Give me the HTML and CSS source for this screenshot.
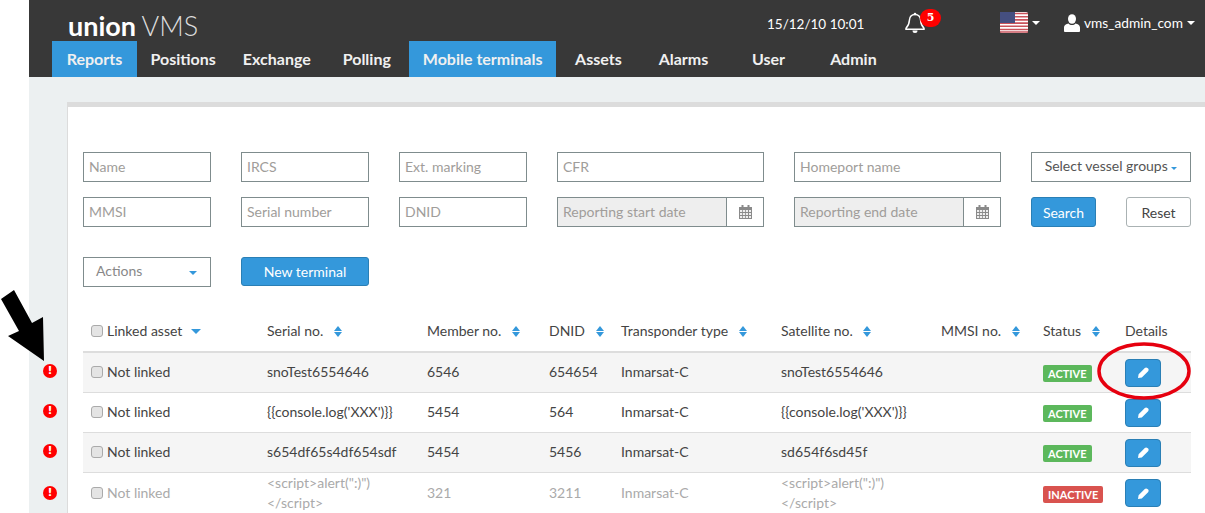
FILE: index.html
```html
<!DOCTYPE html>
<html lang="en">
<head>
    <meta charset="UTF-8">
    <title>union VMS</title>
    <link rel="stylesheet" href="styles.css">
</head>
<body>
    <div class="app">
        <header class="header">
            <div class="topbar">
                <div class="logo"><b>union</b> VMS</div>
                <div class="clock">15/12/10 10:01</div>
                <div class="bell">
                    <svg width="20" height="22" viewBox="0 0 20 22"><path d="M10 2.5c-3.6 0-5.4 2.6-5.6 5.8-.2 3.600-1 5.600-3.400 8v1h18v-1c-2.400-2.400-3.200-4.400-3.400-8C15.400 5.100 13.600 2.500 10 2.500z" fill="none" stroke="#fff" stroke-width="1.500"/><path d="M7.500 18.500a2.500 2.500 0 0 0 5 0z" fill="#fff"/><circle cx="10" cy="2" r="1.300" fill="#fff"/></svg>
                    <span class="bell-count">5</span>
                </div>
                <div class="lang">
                    <svg width="28" height="21" viewBox="0 0 28 21"><rect width="28" height="21" rx="2" fill="#fff"/><path d="M0 1.500h28M0 4.700h28M0 7.900h28M0 11.100h28M0 14.300h28M0 17.500h28M0 20h28" stroke="#c9535c" stroke-width="1.600"/><rect width="15" height="11" fill="#454f80"/></svg>
                    <span class="caret caret-white"></span>
                </div>
                <div class="account">
                    <svg width="16" height="18" viewBox="0 0 16 18"><ellipse cx="8" cy="5" rx="4" ry="4.800" fill="#fff"/><path d="M0 17v-3.500c0-2.500 2.500-3.500 4.500-4 1 1 2 1.500 3.500 1.500s2.500-.5 3.500-1.500c2 .5 4.500 1.500 4.500 4V17c0 .5-.5 1-1 1H1c-.5 0-1-.5-1-1z" fill="#fff"/></svg>
                    <span>vms_admin_com</span>
                    <span class="caret caret-white"></span>
                </div>
            </div>
            <nav class="nav">
                <a class="nav-item active">Reports</a>
                <a class="nav-item">Positions</a>
                <a class="nav-item">Exchange</a>
                <a class="nav-item">Polling</a>
                <a class="nav-item active">Mobile terminals</a>
                <a class="nav-item">Assets</a>
                <a class="nav-item">Alarms</a>
                <a class="nav-item">User</a>
                <a class="nav-item">Admin</a>
            </nav>
        </header>

        <main class="content">
            <section class="panel">
                <div class="filters">
                    <div class="field">Name</div>
                    <div class="field">IRCS</div>
                    <div class="field">Ext. marking</div>
                    <div class="field">CFR</div>
                    <div class="field">Homeport name</div>
                    <div class="field select-groups">Select vessel groups <span class="caret caret-blue caret-small"></span></div>

                    <div class="field">MMSI</div>
                    <div class="field">Serial number</div>
                    <div class="field">DNID</div>
                    <div class="date-field">
                        <div class="date-text">Reporting start date</div>
                        <div class="date-icon"><svg width="13" height="14" viewBox="0 0 13 14"><use href="#calendar"/></svg></div>
                    </div>
                    <div class="date-field">
                        <div class="date-text">Reporting end date</div>
                        <div class="date-icon"><svg width="13" height="14" viewBox="0 0 13 14"><use href="#calendar"/></svg></div>
                    </div>
                    <div class="filter-buttons">
                        <button class="btn btn-blue btn-search">Search</button>
                        <button class="btn btn-plain">Reset</button>
                    </div>
                </div>

                <div class="actions">
                    <div class="field actions-select">Actions <span class="caret caret-blue"></span></div>
                    <button class="btn btn-blue btn-new">New terminal</button>
                </div>

                <table class="results">
                    <colgroup>
                        <col class="col-linked"><col class="col-serial"><col class="col-member"><col class="col-dnid">
                        <col class="col-type"><col class="col-sat"><col class="col-mmsi"><col class="col-status"><col class="col-details">
                    </colgroup>
                    <thead>
                        <tr>
                            <th><span class="check"></span>Linked asset <span class="caret caret-blue sort-down"></span></th>
                            <th>Serial no. <span class="sort"></span></th>
                            <th>Member no. <span class="sort"></span></th>
                            <th>DNID <span class="sort"></span></th>
                            <th>Transponder type <span class="sort"></span></th>
                            <th>Satellite no. <span class="sort"></span></th>
                            <th>MMSI no. <span class="sort"></span></th>
                            <th>Status <span class="sort"></span></th>
                            <th>Details</th>
                        </tr>
                    </thead>
                    <tbody>
                        <tr>
                            <td><span class="alert-mark">!</span><span class="check"></span>Not linked</td>
                            <td>snoTest6554646</td>
                            <td>6546</td>
                            <td>654654</td>
                            <td>Inmarsat-C</td>
                            <td>snoTest6554646</td>
                            <td></td>
                            <td><span class="tag tag-green">ACTIVE</span></td>
                            <td><button class="btn btn-blue btn-edit"><svg width="11" height="11" viewBox="0 0 11 11"><use href="#pencil"/></svg></button></td>
                        </tr>
                        <tr>
                            <td><span class="alert-mark">!</span><span class="check"></span>Not linked</td>
                            <td>{{console.log('XXX')}}</td>
                            <td>5454</td>
                            <td>564</td>
                            <td>Inmarsat-C</td>
                            <td>{{console.log('XXX')}}</td>
                            <td></td>
                            <td><span class="tag tag-green">ACTIVE</span></td>
                            <td><button class="btn btn-blue btn-edit"><svg width="11" height="11" viewBox="0 0 11 11"><use href="#pencil"/></svg></button></td>
                        </tr>
                        <tr>
                            <td><span class="alert-mark">!</span><span class="check"></span>Not linked</td>
                            <td>s654df65s4df654sdf</td>
                            <td>5454</td>
                            <td>5456</td>
                            <td>Inmarsat-C</td>
                            <td>sd654f6sd45f</td>
                            <td></td>
                            <td><span class="tag tag-green">ACTIVE</span></td>
                            <td><button class="btn btn-blue btn-edit"><svg width="11" height="11" viewBox="0 0 11 11"><use href="#pencil"/></svg></button></td>
                        </tr>
                        <tr class="inactive">
                            <td><span class="alert-mark">!</span><span class="check"></span><span class="muted">Not linked</span></td>
                            <td class="muted">&lt;script&gt;alert(":)")<br>&lt;/script&gt;</td>
                            <td class="muted">321</td>
                            <td class="muted">3211</td>
                            <td class="muted">Inmarsat-C</td>
                            <td class="muted">&lt;script&gt;alert(":)")<br>&lt;/script&gt;</td>
                            <td></td>
                            <td><span class="tag tag-red">INACTIVE</span></td>
                            <td><button class="btn btn-blue btn-edit"><svg width="11" height="11" viewBox="0 0 11 11"><use href="#pencil"/></svg></button></td>
                        </tr>
                    </tbody>
                </table>
            </section>
        </main>
    </div>

    <!-- annotations drawn on top of the screenshot -->
    <svg class="arrow" width="46" height="76" viewBox="0 0 46 76"><polygon points="0,14 13,5 31,38 42,32 43,76 7,51 18,46" fill="#000"/></svg>
    <svg class="ring" width="98" height="62" viewBox="0 0 98 62"><ellipse cx="49" cy="30" rx="45" ry="27" fill="none" stroke="#e6000f" stroke-width="3.500"/></svg>

    <svg class="defs" width="0" height="0">
        <symbol id="calendar" viewBox="0 0 13 14"><path d="M0 2h13v12H0z" fill="#8a8a8a"/><path d="M1 5h2.200v2H1zM4 5h2.200v2H4zM7 5h2v2H7zM10 5h2v2h-2zM1 8h2.200v2H1zM4 8h2.200v2H4zM7 8h2v2H7zM10 8h2v2h-2zM1 11h2.200v2H1zM4 11h2.200v2H4zM7 11h2v2H7zM10 11h2v2h-2z" fill="#eee"/><path d="M2.500 0h2v3h-2zM8.500 0h2v3h-2z" fill="#8a8a8a"/></symbol>
        <symbol id="pencil" viewBox="0 0 11 11"><path d="M0 11l.6-3.800L6.800.9c.7-.7 1.900-.7 2.600 0l.7.7c.7.7.7 1.900 0 2.600L3.800 10.400z" fill="#fff"/></symbol>
    </svg>
</body>
</html>
```

FILE: styles.css
```css
html, body {
    margin: 0;
    padding: 0;
    height: 513px;
    overflow: hidden;
}
body {
    position: relative;
    background-color: #fff;
    font-family: "Lato", sans-serif;
    font-size: 14px;
    color: #444;
}
.app {
    margin-left: 29px;
    height: 513px;
    display: flex;
    flex-direction: column;
}

/* header */
.header {
    background-color: #383838;
    height: 77px;
    flex-shrink: 0;
    color: #fff;
}
.topbar {
    height: 41px;
    display: flex;
    align-items: center;
    position: relative;
}
.logo {
    margin-left: 39px;
    margin-top: 10px;
    font-size: 27px;
    font-weight: 300;
    line-height: 30px;
    word-spacing: -1px;
    width: 699px;
    color: #ddd;
}
.logo b {
    font-weight: 700;
    color: #fff;
}
.clock {
    width: 138px;
    font-size: 13.500px;
    margin-top: 7px;
}
.bell {
    position: relative;
    width: 95px;
    height: 22px;
    margin-top: 4px;
}
.bell-count {
    position: absolute;
    left: 15px;
    top: -3px;
    width: 21px;
    height: 18px;
    border-radius: 9px;
    background-color: #f00;
    font-family: "DejaVu Serif", serif;
    font-size: 11px;
    font-weight: 700;
    line-height: 17px;
    text-align: center;
}
.lang {
    display: flex;
    align-items: center;
    gap: 4px;
    width: 64px;
    margin-top: 4px;
}
.account {
    display: flex;
    align-items: center;
    font-size: 13.700px;
    gap: 4px;
    margin-top: 4px;
}
.caret {
    display: inline-block;
    width: 0;
    height: 0;
    border-left: 4px solid transparent;
    border-right: 4px solid transparent;
    border-top: 4px solid #fff;
}
.caret-white {
    border-top-color: #fff;
}
.caret-blue {
    border-top-color: #3498db;
}
.caret-small {
    border-left-width: 3.500px;
    border-right-width: 3.500px;
    border-top-width: 3.500px;
    vertical-align: 1px;
}
.nav {
    display: flex;
    height: 36px;
    margin-left: 23px;
}
.nav-item {
    min-width: 85px;
    box-sizing: border-box;
    padding: 0 13.500px;
    text-align: center;
    font-size: 16px;
    font-weight: 700;
    line-height: 35px;
    color: #f0f0f0;
}
.nav-item.active {
    background-color: #3498db;
}

/* main panel */
.content {
    flex: 1;
    background-color: #ecf0f1;
    padding: 25px 0 0 38px;
    min-height: 0;
}
.panel {
    background-color: #fff;
    border-top: 5px solid #dcdcdc;
    border-left: 1px solid #dcdcdc;
    height: 100%;
    box-sizing: border-box;
    padding: 45px 14px 0 15px;
}
.filters {
    display: grid;
    grid-template-columns: 128px 128px 128px 207px 207px 160px;
    grid-template-rows: 30px 30px;
    column-gap: 30px;
    row-gap: 15px;
}
.field {
    border: 1px solid #7f8c8d;
    box-sizing: border-box;
    height: 30px;
    line-height: 28px;
    padding-left: 5px;
    color: #a09d9a;
    background-color: #fff;
}
.select-groups {
    text-align: center;
    padding-left: 0;
    color: #555;
    line-height: 26px;
}
.date-field {
    display: flex;
    border: 1px solid #7f8c8d;
    box-sizing: border-box;
    height: 30px;
}
.date-text {
    flex: 1;
    background-color: #eee;
    border-right: 1px solid #7f8c8d;
    line-height: 28px;
    padding-left: 5px;
    color: #a09d9a;
}
.date-icon {
    width: 36px;
    display: flex;
    align-items: center;
    justify-content: center;
}
.filter-buttons {
    display: flex;
    justify-content: space-between;
}
.btn {
    font-family: "Lato", sans-serif;
    font-size: 14px;
    border-radius: 3px;
    padding: 0;
    box-sizing: border-box;
    cursor: pointer;
}
.btn-blue {
    background-color: #3498db;
    border: 1px solid #2a7fb5;
    color: #fff;
}
.btn-plain {
    background-color: #fff;
    border: 1px solid #aab2b3;
    color: #444;
    width: 65px;
}
.btn-search {
    width: 65px;
}
.actions {
    display: flex;
    gap: 30px;
    margin-top: 30px;
}
.actions-select {
    width: 128px;
    padding: 0 13px 2px 12px;
    display: flex;
    align-items: center;
    justify-content: space-between;
    line-height: 26px;
    color: #888;
}
.actions-select .caret {
    margin-top: 4px;
}
.btn-new {
    width: 128px;
    height: 29px;
}

/* table */
.results {
    border-collapse: collapse;
    table-layout: fixed;
    width: 1108px;
    margin-top: 29px;
}
.col-linked { width: 176px; }
.col-serial { width: 160px; }
.col-member { width: 122px; }
.col-dnid { width: 72px; }
.col-type { width: 160px; }
.col-sat { width: 160px; }
.col-mmsi { width: 102px; }
.col-status { width: 82px; }
.col-details { width: 74px; }
.results th {
    height: 30px;
    padding: 5px 8px 0;
    font-weight: 400;
    line-height: 20px;
    text-align: left;
    vertical-align: top;
    white-space: nowrap;
    color: #444;
    border-bottom: 2px solid #ddd;
}
.results td {
    position: relative;
    height: 37px;
    padding: 0 8px 2px;
    border-bottom: 1px solid #ddd;
    white-space: nowrap;
    line-height: 20px;
}
.results tr.inactive td {
    height: 39px;
    padding-bottom: 0;
}
.results tbody tr:nth-child(odd) {
    background-color: #f5f5f5;
}
.results tbody tr.inactive {
    background-color: #fff;
}
.muted {
    color: #aaa;
}
.check {
    display: inline-block;
    width: 12px;
    height: 12px;
    margin-right: 4px;
    border: 1px solid #aaa;
    border-radius: 3px;
    background-color: #e4e4e4;
    box-sizing: border-box;
    vertical-align: -1px;
}
.sort {
    display: inline-block;
    width: 9px;
    height: 11px;
    margin-left: 7px;
    vertical-align: -1px;
    position: relative;
}
.sort::before, .sort::after {
    content: "";
    position: absolute;
    left: 0;
    border-left: 4.500px solid transparent;
    border-right: 4.500px solid transparent;
}
.sort::before {
    top: 0;
    border-bottom: 5px solid #3498db;
}
.sort::after {
    bottom: 0;
    border-top: 5px solid #3498db;
}
.sort-down {
    margin-left: 5px;
    border-left-width: 5px;
    border-right-width: 5px;
    border-top-width: 5px;
    vertical-align: 2px;
}
.tag {
    display: inline-block;
    height: 17px;
    line-height: 17px;
    padding: 0 5px;
    border-radius: 2px;
    margin-top: 2px;
    font-size: 11px;
    font-weight: 700;
    color: #fff;
    vertical-align: middle;
}
.tag-green {
    background-color: #5cb85c;
}
.tag-red {
    background-color: #d9534f;
    margin-top: 0;
}
.btn-edit {
    width: 36px;
    height: 28px;
    margin-top: 2px;
    display: flex;
    align-items: center;
    justify-content: center;
    border-radius: 4px;
}
.inactive .btn-edit {
    margin-top: 0;
}

/* annotations */
.alert-mark {
    position: absolute;
    left: -40px;
    top: 50%;
    margin-top: -9px;
    width: 14px;
    height: 14px;
    border-radius: 50%;
    background-color: #f00;
    color: #fff;
    font-family: "DejaVu Sans", sans-serif;
    font-size: 11px;
    font-weight: 700;
    line-height: 14px;
    text-align: center;
}
.inactive .alert-mark {
    margin-top: -7px;
}
.arrow {
    position: absolute;
    left: 1px;
    top: 285px;
}
.ring {
    position: absolute;
    left: 1095px;
    top: 341px;
}
.defs {
    position: absolute;
}
```
